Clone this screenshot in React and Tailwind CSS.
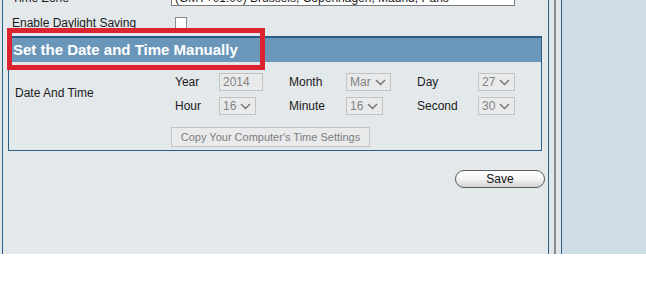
import React from "react";

function Chevron() {
  return (
    <svg width="11" height="7" viewBox="0 0 11 7" className="shrink-0">
      <path d="M1 1 L5.5 5.5 L10 1" fill="none" stroke="#6f6f6f" strokeWidth="1.3" />
    </svg>
  );
}

function Sel({ value, w }) {
  return (
    <div
      className={`flex items-center justify-between h-[18px] border border-[#c3c3c3] bg-[#e9eaeb] pl-[3px] pr-[4px] text-[12px] text-[#838383] ${w}`}
    >
      <span>{value}</span>
      <Chevron />
    </div>
  );
}

export default function App() {
  return (
    <div className="w-[646px] h-[308px] bg-white overflow-hidden font-['Liberation_Sans',Arial,sans-serif]">
      <div className="flex h-[254px] bg-[#e3e8eb]">
        <div className="w-[2px] shrink-0" />
        <div className="relative w-[547px] shrink-0 border-l border-r border-[#2d5f86]">
          {/* Time zone row */}
          <div className="flex h-[16px] -mt-[10px] items-center">
            <div className="w-[168px] pl-[9px] text-[12px] text-[#1b1b1b]">Time Zone</div>
            <div className="flex items-center justify-between w-[344px] h-[16px] border border-[#7d7d7d] bg-white pl-[3px] pr-[6px] text-[12px] text-[#1b1b1b]">
              <span>(GMT+01:00) Brussels, Copenhagen, Madrid, Paris</span>
              <svg width="7" height="4" viewBox="0 0 7 4">
                <path d="M0 0 L7 0 L3.5 4 Z" fill="#222" />
              </svg>
            </div>
          </div>
          {/* Daylight row */}
          <div className="flex h-[30px] pt-[3px] items-center">
            <div className="w-[172px] pl-[9px] text-[12px] text-[#1b1b1b]">Enable Daylight Saving</div>
            <div className="w-[12px] h-[12px] border border-[#8a8a8a] bg-white" />
          </div>
          {/* Fieldset */}
          <div className="ml-[5px] w-[534px] border-l border-r border-b border-[#2d5f86]">
            <div className="h-[26px] border-t-2 border-[#2a5c83] bg-[#6a96ba] pl-[4px] flex items-center text-[15px] font-bold text-white">
              Set the Date and Time Manually
            </div>
            <div className="pt-[11px] pb-[3px]">
              <div className="flex">
                <div className="w-[166px] pl-[6px] flex items-center text-[12px] text-[#1b1b1b]">
                  <span className="-mt-[3px]">Date And Time</span>
                </div>
                <div className="flex flex-col gap-[6px] text-[12px] text-[#1b1b1b]">
                  <div className="flex h-[18px] items-center">
                    <div className="w-[44px]">Year</div>
                    <div className="w-[70px]">
                      <div className="w-[44px] h-[18px] border border-[#c3c3c3] bg-[#e9eaeb] pl-[3px] flex items-center text-[#838383]">2014</div>
                    </div>
                    <div className="w-[57px]">Month</div>
                    <div className="w-[71px]">
                      <Sel value="Mar" w="w-[45px]" />
                    </div>
                    <div className="w-[61px]">Day</div>
                    <div>
                      <Sel value="27" w="w-[37px]" />
                    </div>
                  </div>
                  <div className="flex h-[18px] items-center">
                    <div className="w-[44px]">Hour</div>
                    <div className="w-[70px]">
                      <Sel value="16" w="w-[37px]" />
                    </div>
                    <div className="w-[57px]">Minute</div>
                    <div className="w-[71px]">
                      <Sel value="16" w="w-[37px]" />
                    </div>
                    <div className="w-[61px]">Second</div>
                    <div>
                      <Sel value="30" w="w-[37px]" />
                    </div>
                  </div>
                </div>
              </div>
              <div className="mt-[12px] ml-[162px] w-[199px] h-[20px] border border-[#c3c3c3] bg-[#e9eaeb] flex items-center justify-center text-[11px] text-[#7d7d7d]">
                Copy Your Computer's Time Settings
              </div>
            </div>
          </div>
          {/* Save */}
          <div className="flex justify-end mt-[19px] pr-[3px]">
            <div className="w-[90px] h-[18px] rounded-full border border-[#5a5a5a] bg-gradient-to-b from-white via-[#f4f4f4] to-[#d2d2d2] flex items-center justify-center text-[12px] text-[#111]">
              Save
            </div>
          </div>
          {/* Red annotation */}
          <div className="absolute left-[4px] top-[28px] w-[258px] h-[42px] border-[5px] border-[#dc2430]" />
        </div>
        <div className="w-[5px] shrink-0 bg-[#dfe6ea]" />
        <div className="w-[2px] shrink-0 bg-[#8a8a8a]" />
        <div className="w-[5px] shrink-0 bg-[#dfe6ea]" />
        <div className="w-px shrink-0 bg-[#2d5f86]" />
        <div className="flex-1 bg-[#cfdde4]" />
      </div>
    </div>
  );
}
